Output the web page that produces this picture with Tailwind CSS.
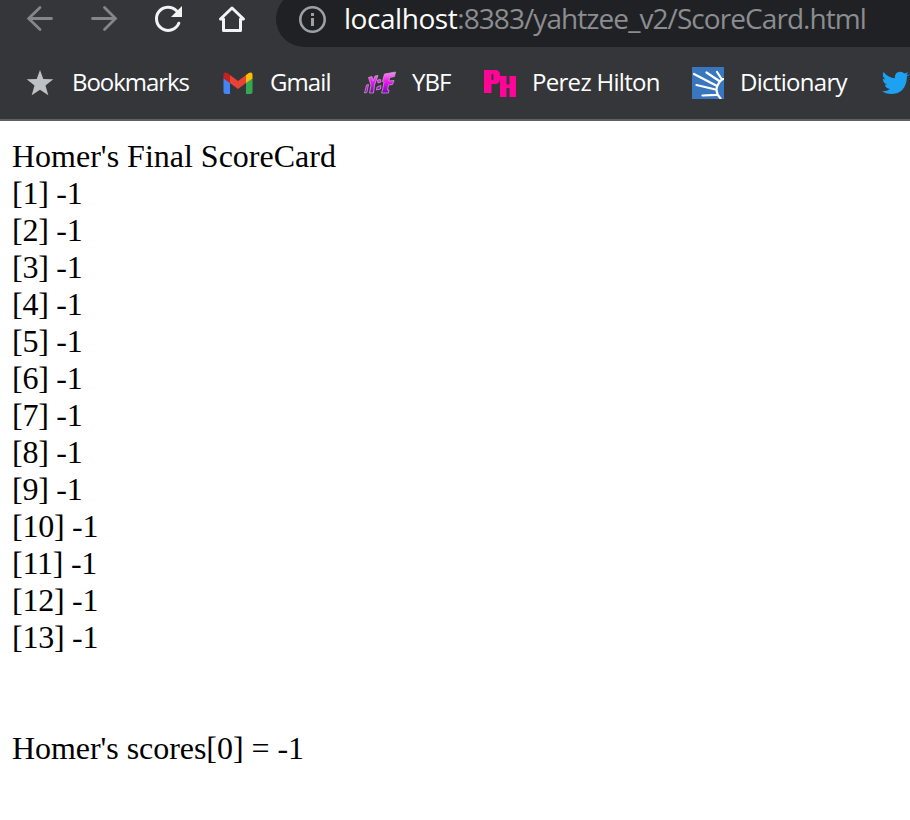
<!DOCTYPE html>
<html lang="en">
<head>
<meta charset="utf-8">
<title>ScoreCard</title>
<script src="https://cdn.jsdelivr.net/npm/@tailwindcss/browser@4"></script>
</head>
<body class="w-[910px] h-[820px] overflow-hidden bg-white">
<header class="h-[121px] bg-[#35363a] border-b-2 border-[#5f6063] overflow-hidden font-['Open_Sans','Noto_Sans',sans-serif]">
  <div class="flex h-[47px] items-start overflow-hidden">
    <svg class="shrink-0 w-[276px] h-[47px]" viewBox="0 0 276 47" fill="none">
      <g stroke="#85868a" stroke-width="2.8" stroke-linecap="round" stroke-linejoin="miter">
        <path d="M51.5 18.5H29M40 7.5L28.7 18.5L40 29.5"/>
        <path d="M92.500 18.500H115M104.500 7.500L115.500 18.500L104.500 29.500"/>
      </g>
      <path d="M178.800 23.200A11.600 11.600 0 1 1 176.500 10.800" stroke="#f1f3f4" stroke-width="3" stroke-linecap="round"/>
      <path d="M182 6V17H171Z" fill="#f1f3f4"/>
      <path d="M223.500 30.500V19H220.500L232 8L243.500 19H240.500V30.500Z" stroke="#f1f3f4" stroke-width="3" stroke-linejoin="round"/>
    </svg>
    <div class="-mt-[9px] flex h-[56px] grow items-center rounded-l-[28px] bg-[#202124] pl-[23px]">
      <svg class="w-[27px] h-[27px] shrink-0" viewBox="0 0 27 27" fill="none"><circle cx="13.500" cy="13.500" r="12.200" stroke="#9aa0a6" stroke-width="2.600"/><path d="M12 7h3v3h-3zM12 12h3v8h-3z" fill="#9aa0a6"/></svg>
      <div class="ml-[18px] pb-[2px] whitespace-nowrap text-[28px] leading-[38px] tracking-[-0.93px] text-[#8b8d90]"><span class="text-white tracking-[-0.45px]">localhost</span>:8383/yahtzee_v2/ScoreCard.html</div>
    </div>
  </div>
  <nav class="flex h-[72px] items-center whitespace-nowrap text-[24px] leading-[32px] text-white">
    <div class="flex w-[222px] shrink-0 items-center pl-[26px]">
      <svg class="h-[28px] w-[28px]" viewBox="0 0 28 28"><path fill="#bdc1c6" d="M14 1L17.300 10.100L27.300 10.300L19.500 16.500L22.300 26.200L14 20.700L5.700 26.200L8.500 16.500L.7 10.300L10.700 10.100Z"/></svg>
      <span class="ml-[18px] pb-[2px] tracking-[-1.05px]">Bookmarks</span>
    </div>
    <div class="flex w-[142px] shrink-0 items-center">
      <svg class="h-[24px] w-[32px]" viewBox="0 0 32 24">
        <path fill="#4285f4" d="M1.500 7L8 11.500V23H3.500Q1.500 23 1.500 21Z"/>
        <path fill="#34a853" d="M24 11.500L30.500 7V21Q30.500 23 28.500 23H24Z"/>
        <path fill="#fbbc04" d="M24 4Q30.500-1 30.500 4.500V7.500L24 12Z"/>
        <path fill="#c5221f" d="M1.500 4.500Q1.500-1 8 4V12L1.500 7.500Z"/>
        <path fill="#ea4335" d="M8 4L16 10L24 4V12L16 18L8 12Z"/>
      </svg>
      <span class="ml-[16px] pb-[2px] tracking-[-0.9px]">Gmail</span>
    </div>
    <div class="flex w-[120px] shrink-0 items-center">
      <svg class="h-[24px] w-[32px]" viewBox="0 0 32 24">
        <defs><linearGradient id="ybf" gradientUnits="userSpaceOnUse" x1="0" y1="1" x2="0" y2="23"><stop offset="0" stop-color="#ff8cf4"/><stop offset=".4" stop-color="#f31df3"/><stop offset="1" stop-color="#7500b5"/></linearGradient></defs>
        <g fill="url(#ybf)" stroke="#c79acb" stroke-width=".8" stroke-linejoin="round">
          <path d="M2.500 14L4.500 13.500L2.800 21.500L.5 22Z"/>
          <path d="M4.500 6.500L8 5.500L9 10L11 5L14 4.500L10.500 14L9.500 22H5.500L7 14Z"/>
          <path d="M13.500 9L16.500 8.500L17 11L14 12Z"/>
          <path d="M13 16L17 14.500L16.500 18L12.500 19Z"/>
          <path d="M20.500 3L31.500 1L30.500 5.500L25.500 6.500L25 10L30 9.500L28.500 13.500L24.500 14L23.500 19H25L24.500 22H17.500L18.500 19L20 11L18.500 10.500Z"/>
        </g>
      </svg>
      <span class="ml-[16px] pb-[2px] tracking-[-0.9px]">YBF</span>
    </div>
    <div class="flex w-[208px] shrink-0 items-center">
      <svg class="h-[28px] w-[32px]" viewBox="0 0 32 28" fill="#ff0496">
        <path fill-rule="evenodd" d="M0 1H11Q16 1 16 6V9.500Q16 15 11 15H7.500V24H0ZM7.500 5V11H8.500Q9.500 11 9.500 9.500V6.500Q9.500 5 8.500 5Z"/>
        <path d="M16 7H22.500V15.500H25.500V7H32V28H25.500V19H22.500V28H16Z"/>
      </svg>
      <span class="ml-[16px] pb-[2px] tracking-[-0.7px]">Perez Hilton</span>
    </div>
    <div class="flex w-[190px] shrink-0 items-center">
      <svg class="h-[32px] w-[32px] bg-[#3876bf]" viewBox="0 0 32 32" fill="none" stroke="#fff" stroke-width="2.2" stroke-linecap="round"><path d="M31.500 12Q28 13 25.500 18.500Q22.500 25 28.500 31.500M2 7L25 19M14.500 5.500L28 14.500M25 5L30 12.500M4.500 18L24.500 22.800M10.500 28.500L25 27.800"/></svg>
      <span class="ml-[16px] pb-[2px] tracking-[-0.7px]">Dictionary</span>
    </div>
    <svg class="h-[24px] w-[28px] shrink-0" viewBox="0 0 28 24"><path fill="#1da1f2" d="M28 3.500Q26.500 4.800 25 5Q24.500 23 8.500 23Q3.500 22.800 0 20.300Q4.500 20.700 8 18Q4 17.500 2.700 13.800H5.200Q1 12.300.8 7.800L3.300 8.500Q-.5 5.500 1.500 1Q6.500 7 13 7.300Q12.200 1.500 18 .8Q20.500.6 22.500 2.600L26 1.200Q25.500 3 24.200 4Q26 3.900 28 3.500Z"/></svg>
  </nav>
</header>
<main class="pt-[17px] pl-[12px] text-[32px] leading-[37px] text-black font-['Liberation_Serif',serif]">
  <p>Homer's Final ScoreCard</p>
  <div class="tracking-[-0.25px]">
    <p>[1] -1</p>
    <p>[2] -1</p>
    <p>[3] -1</p>
    <p>[4] -1</p>
    <p>[5] -1</p>
    <p>[6] -1</p>
    <p>[7] -1</p>
    <p>[8] -1</p>
    <p>[9] -1</p>
    <p>[10] -1</p>
    <p>[11] -1</p>
    <p>[12] -1</p>
    <p>[13] -1</p>
  </div>
  <p class="mt-[74px] tracking-[-0.05px]">Homer's scores[0] = -1</p>
</main>
</body>
</html>
